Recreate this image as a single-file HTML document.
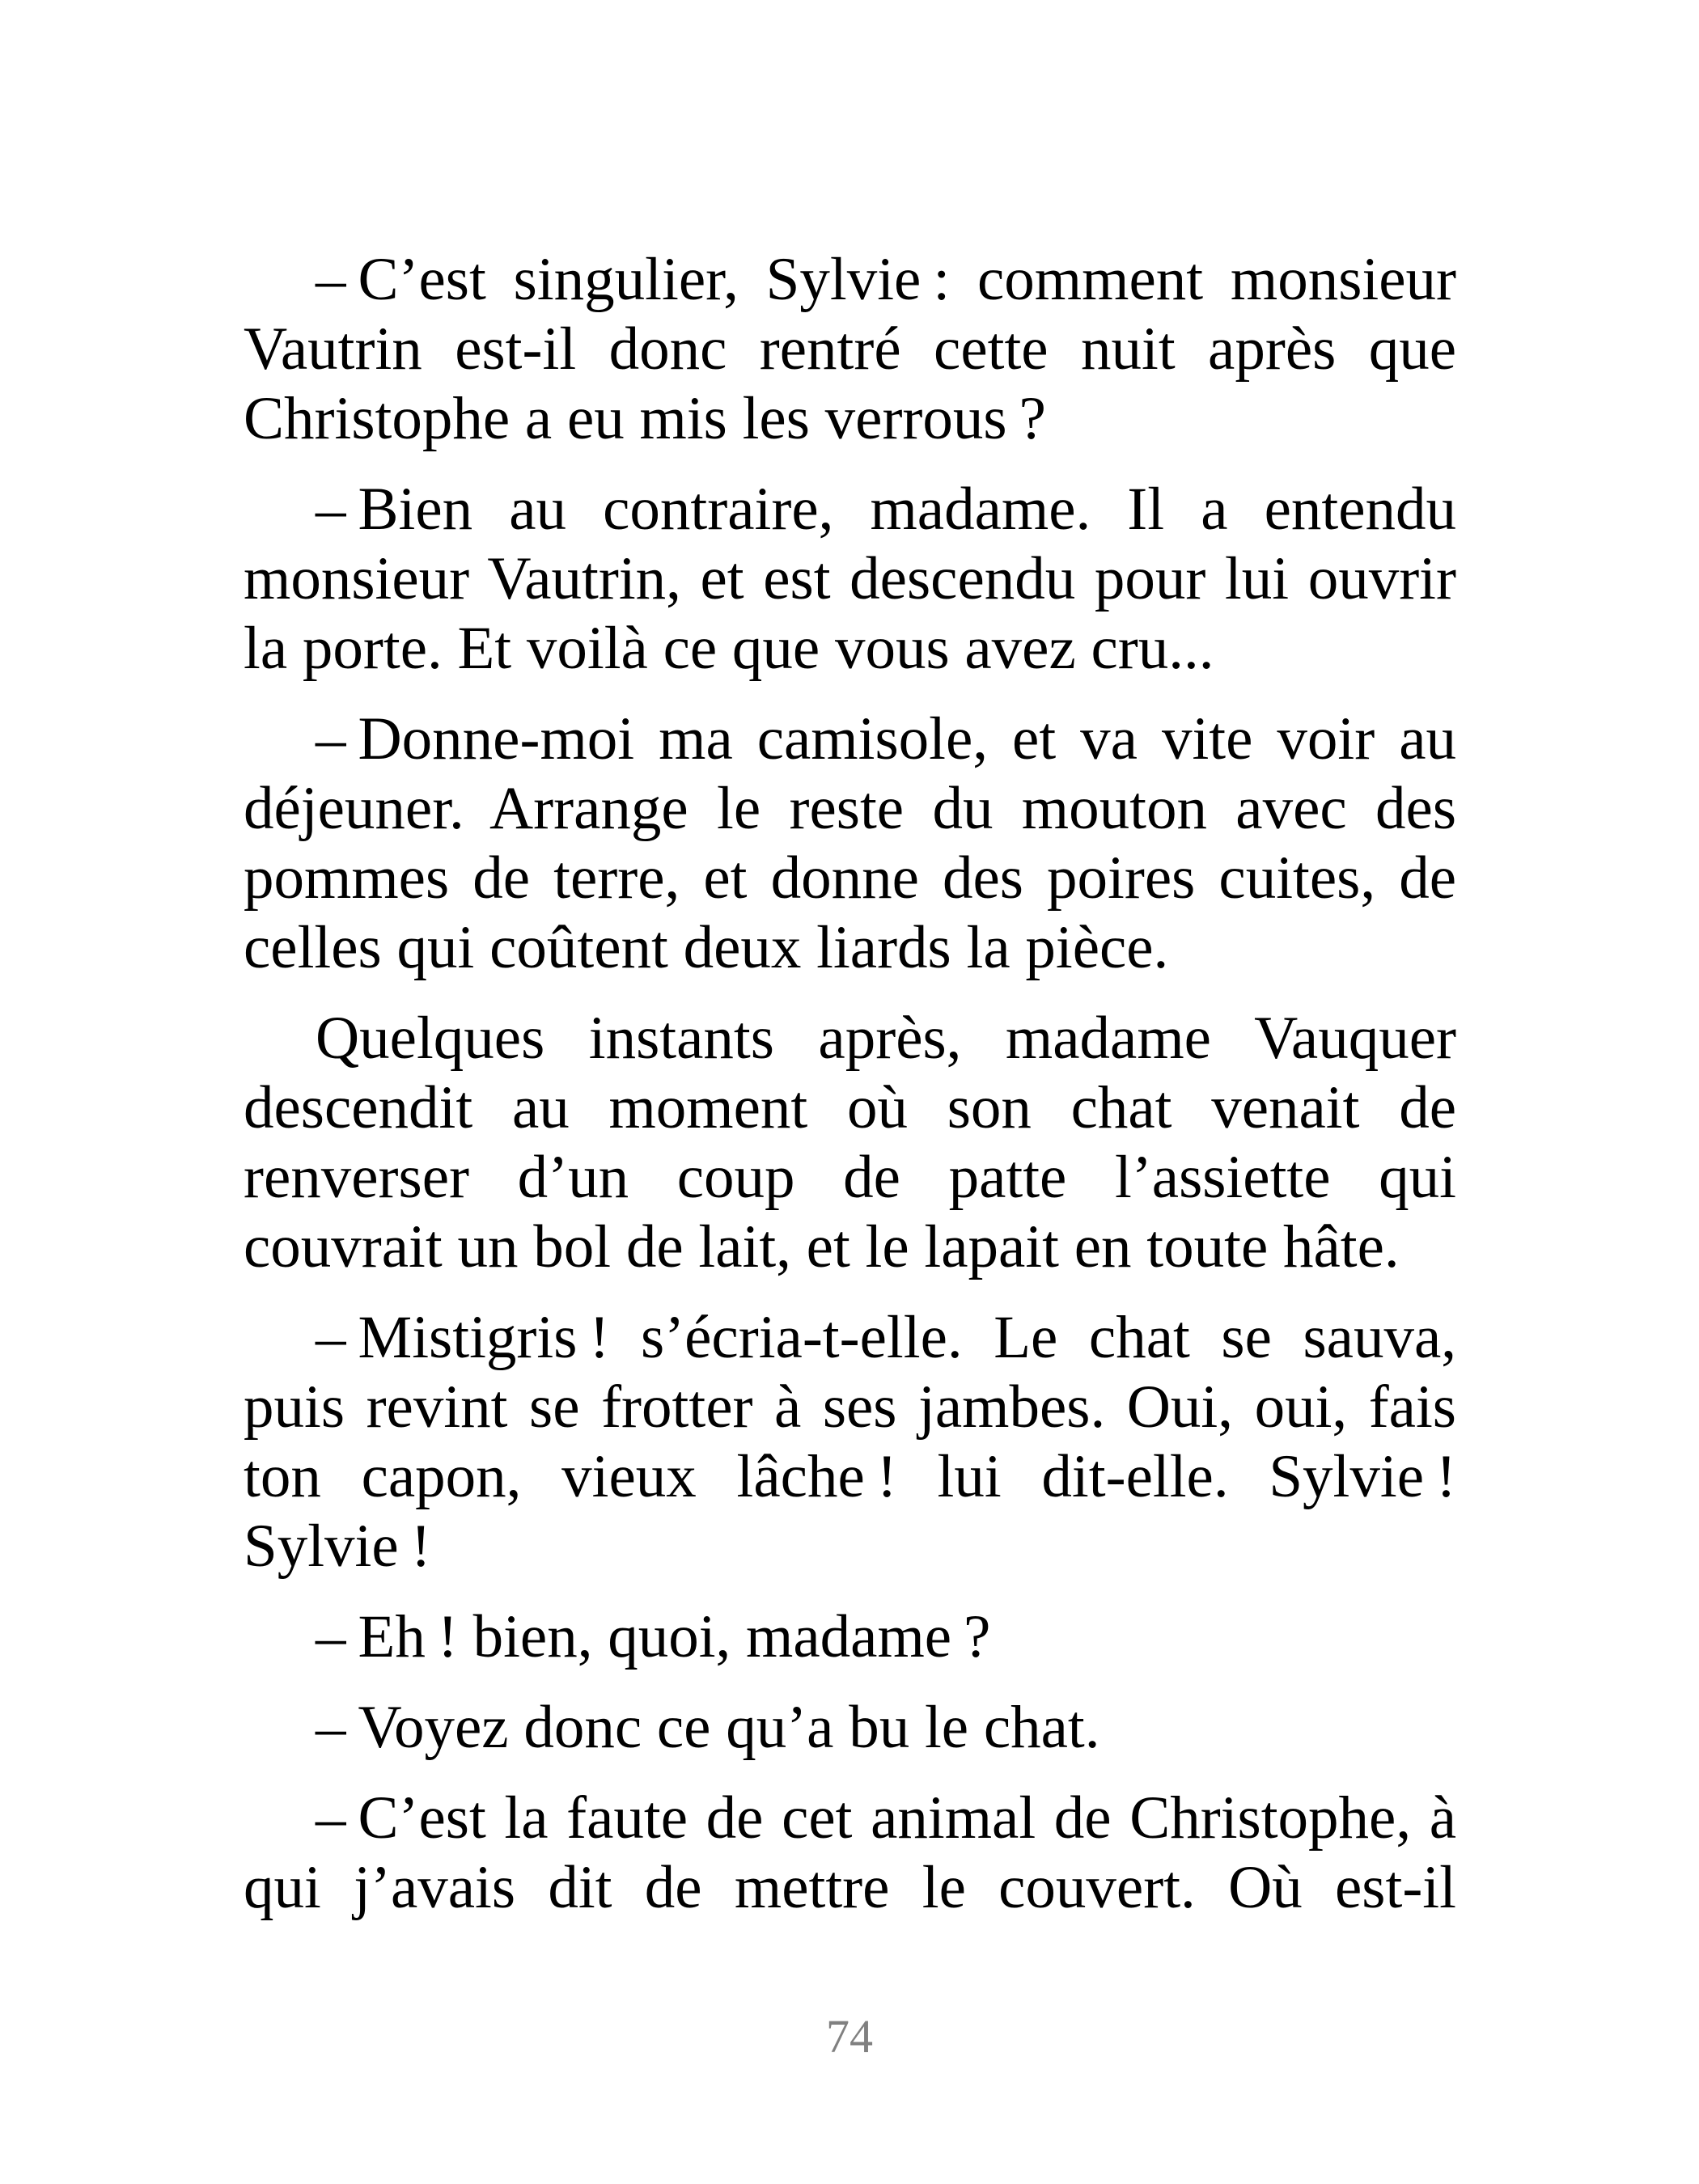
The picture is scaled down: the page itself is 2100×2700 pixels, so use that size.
<!DOCTYPE html>
<html lang="fr">
<head>
<meta charset="utf-8">
<style>
html,body{margin:0;padding:0;background:#fff;}
body{width:2100px;height:2700px;position:relative;overflow:hidden;}
#t{position:absolute;left:301px;top:303px;width:1499px;font-family:"Liberation Serif",serif;font-size:75px;line-height:86px;color:#000;}
.p{margin:0 0 26px 0;}
.l{display:block;text-align:justify;text-align-last:justify;white-space:nowrap;}
.e{text-align:left;text-align-last:left;}
.i{padding-left:89px;}
#n{position:absolute;left:0;width:2100px;top:2488px;text-align:center;font-family:"Liberation Serif",serif;font-size:58px;line-height:60px;color:#808080;}
</style>
</head>
<body>
<div id="t">
<div class="p">
<div class="l i">–&#8239;C’est singulier, Sylvie&#8239;: comment monsieur</div>
<div class="l">Vautrin est-il donc rentré cette nuit après que</div>
<div class="l e">Christophe a eu mis les verrous&#8239;?</div>
</div>
<div class="p">
<div class="l i">–&#8239;Bien au contraire, madame. Il a entendu</div>
<div class="l">monsieur Vautrin, et est descendu pour lui ouvrir</div>
<div class="l e">la porte. Et voilà ce que vous avez cru...</div>
</div>
<div class="p">
<div class="l i">–&#8239;Donne-moi ma camisole, et va vite voir au</div>
<div class="l">déjeuner. Arrange le reste du mouton avec des</div>
<div class="l">pommes de terre, et donne des poires cuites, de</div>
<div class="l e">celles qui coûtent deux liards la pièce.</div>
</div>
<div class="p">
<div class="l i">Quelques instants après, madame Vauquer</div>
<div class="l">descendit au moment où son chat venait de</div>
<div class="l">renverser d’un coup de patte l’assiette qui</div>
<div class="l e">couvrait un bol de lait, et le lapait en toute hâte.</div>
</div>
<div class="p">
<div class="l i">–&#8239;Mistigris&#8239;! s’écria-t-elle. Le chat se sauva,</div>
<div class="l">puis revint se frotter à ses jambes. Oui, oui, fais</div>
<div class="l">ton capon, vieux lâche&#8239;! lui dit-elle. Sylvie&#8239;!</div>
<div class="l e">Sylvie&#8239;!</div>
</div>
<div class="p">
<div class="l i e">–&#8239;Eh&#8239;! bien, quoi, madame&#8239;?</div>
</div>
<div class="p">
<div class="l i e">–&#8239;Voyez donc ce qu’a bu le chat.</div>
</div>
<div class="p">
<div class="l i">–&#8239;C’est la faute de cet animal de Christophe, à</div>
<div class="l">qui j’avais dit de mettre le couvert. Où est-il</div>
</div>
</div>
<div id="n">74</div>
</body>
</html>
